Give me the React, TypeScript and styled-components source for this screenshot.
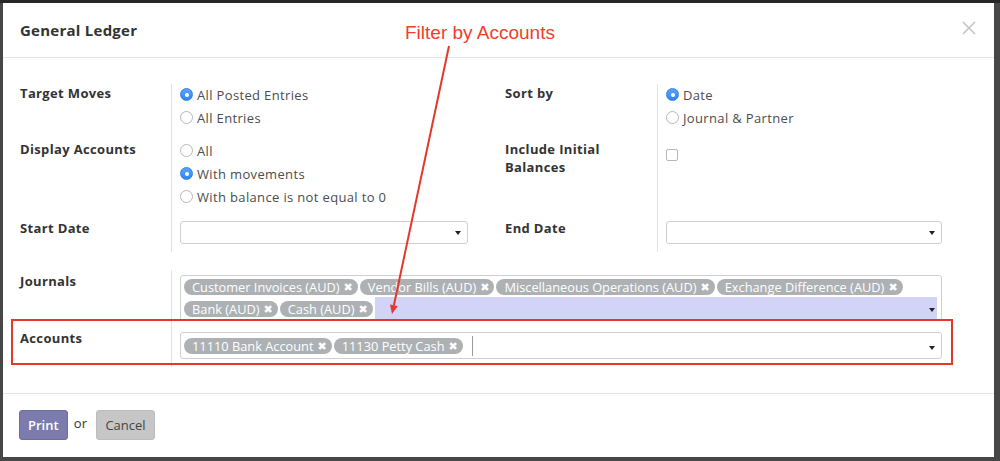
import React from "react";
import styled, { createGlobalStyle } from "styled-components";

const Global = createGlobalStyle`
  html, body { margin: 0; padding: 0; }
  body { font-family: "Open Sans", "DejaVu Sans", sans-serif; font-size: 13px; color: #4c4c4c; }
  * { box-sizing: border-box; }
`;

const Backdrop = styled.div`
  position: relative;
  width: 1000px;
  height: 461px;
  overflow: hidden;
  padding: 3px 6px 4px 3px;
  background: linear-gradient(#262626 0 3px, #474747 3px 100%);
`;

const Dialog = styled.div`
  height: 454px;
  background: #fff;
  display: flex;
  flex-direction: column;
`;

const Header = styled.div`
  height: 55px;
  flex: none;
  display: flex;
  align-items: center;
  justify-content: space-between;
  padding: 0 17px 0 17px;
  border-bottom: 1px solid #e5e5e5;
`;

const Title = styled.h4`
  margin: 0;
  font-size: 15px;
  font-weight: 700;
  color: #333;
  letter-spacing: 0.25px;
`;

const CloseBtn = styled.button`
  border: 0;
  background: none;
  padding: 0;
  width: 14px;
  height: 14px;
  display: flex;
  margin-right: 1px;
  margin-top: -4px;
`;

const Body = styled.div`
  flex: 1;
  padding: 26px 17px 0 17px;
`;

const TopGrid = styled.div`
  display: grid;
  grid-template-columns: 151px 297px 189px 285px;
`;

const BottomGrid = styled.div`
  display: grid;
  grid-template-columns: 151px 771px;
  margin-top: 18px;
`;

const Label = styled.div<{ $indent?: boolean; $pt?: number; $pb?: number }>`
  padding-left: ${(p) => (p.$indent ? 37 : 0)}px;
  padding-top: ${(p) => p.$pt ?? 0}px;
  padding-bottom: ${(p) => p.$pb ?? 10}px;
  font-weight: 700;
  color: #333;
  line-height: 18px;
  letter-spacing: 0.35px;
`;

const Field = styled.div<{ $pt?: number; $pb?: number }>`
  border-left: 1px solid #e2e2e2;
  padding-left: 8px;
  padding-top: ${(p) => p.$pt ?? 0}px;
  padding-bottom: ${(p) => p.$pb ?? 10}px;
`;

const RadioRow = styled.label`
  display: flex;
  align-items: center;
  height: 23px;
  gap: 4px;
  color: #4c4c4c;
  letter-spacing: 0.35px;
  margin-top: -1px;
  margin-bottom: 1px;
`;

const RadioDot = styled.span<{ $on?: boolean }>`
  width: 13px;
  height: 13px;
  border-radius: 50%;
  flex: none;
  display: flex;
  align-items: center;
  justify-content: center;
  background: ${(p) => (p.$on ? "linear-gradient(#5aa4fb, #2f86f0)" : "#fff")};
  border: 1px solid ${(p) => (p.$on ? "#2f7fe4" : "#b8b8b8")};
  &::after {
    content: "";
    width: 4px;
    height: 4px;
    border-radius: 50%;
    background: #fff;
    display: ${(p) => (p.$on ? "block" : "none")};
  }
`;

const Check = styled.span`
  display: block;
  width: 12px;
  height: 12px;
  margin-top: 9px;
  margin-left: 0;
  border: 1px solid #b8b8b8;
  border-radius: 2px;
  background: #fff;
`;

const SelectBox = styled.div<{ $h?: number }>`
  position: relative;
  height: ${(p) => p.$h ?? 23}px;
  border: 1px solid #cfcfcf;
  border-radius: 3px;
  background: #fff;
`;

const Caret = styled.span`
  position: absolute;
  right: 6px;
  bottom: 8px;
  width: 0;
  height: 0;
  border-left: 3.5px solid transparent;
  border-right: 3.5px solid transparent;
  border-top: 4px solid #222;
`;

const TagBox = styled.div`
  position: relative;
  display: flex;
  flex-wrap: wrap;
  align-items: center;
  border: 1px solid #cfcfcf;
  border-radius: 3px;
  padding: 1px 4px 0 3px;
  background: #fff;
`;

const TagBoxSingle = styled(TagBox)`
  height: 27px;
  padding-top: 0;
`;

const Tag = styled.span`
  display: inline-flex;
  align-items: center;
  height: 16px;
  margin: 2px 2px 2px 0;
  padding: 0 5px 0 8px;
  border-radius: 8px;
  background: #adb1b4;
  color: #fff;
  font-size: 12.8px;
  line-height: 16px;
  white-space: nowrap;
  gap: 4px;
`;

const TagX = styled.span`
  font-size: 11px;
  font-weight: 700;
  line-height: 16px;
`;

const TagInput = styled.div<{ $active?: boolean }>`
  flex: 1;
  min-width: 60px;
  height: 23px;
  background: ${(p) => (p.$active ? "#d3d3f8" : "transparent")};
`;

const Cursor = styled.span`
  width: 1px;
  height: 20px;
  background: #9a9a9a;
  margin-left: 7px;
`;

const Footer = styled.div`
  flex: none;
  height: 64px;
  border-top: 1px solid #e5e5e5;
  padding: 16px 16px 0 16px;
  display: flex;
  align-items: flex-start;
`;

const Button = styled.button<{ $primary?: boolean }>`
  height: 30px;
  padding: 0 ${(p) => (p.$primary ? 8 : 8)}px;
  border-radius: 3px;
  border: 1px solid ${(p) => (p.$primary ? "#6e6d9e" : "#bdbdbd")};
  background: ${(p) => (p.$primary ? "#7c7bad" : "#c6c6c6")};
  color: ${(p) => (p.$primary ? "#fff" : "#444")};
  font-family: "Open Sans", sans-serif;
  font-size: 13px;
  font-weight: ${(p) => (p.$primary ? 600 : 400)};
`;

const Or = styled.span`
  margin: 3px 9px 0 6px;
  color: #333;
  font-size: 13px;
  line-height: 20px;
  letter-spacing: 0.3px;
`;

const Note = styled.div`
  position: absolute;
  left: 405px;
  top: 22px;
  font-family: "Liberation Sans", Arial, sans-serif;
  font-size: 19px;
  color: #f23d2b;
  white-space: nowrap;
`;

const RedBox = styled.div`
  position: absolute;
  left: 11px;
  top: 319px;
  width: 942px;
  height: 46px;
  border: 2px solid #e3382a;
  pointer-events: none;
`;

const ArrowSvg = styled.svg`
  position: absolute;
  left: 0;
  top: 0;
  pointer-events: none;
`;

const Radio = ({ on, children }: { on?: boolean; children: React.ReactNode }) => (
  <RadioRow>
    <RadioDot $on={on} />
    {children}
  </RadioRow>
);

const T = ({ children }: { children: React.ReactNode }) => (
  <Tag>
    {children}
    <TagX>✖</TagX>
  </Tag>
);

export default function App() {
  return (
    <>
      <Global />
      <Backdrop>
        <Dialog>
          <Header>
            <Title>General Ledger</Title>
            <CloseBtn aria-label="close">
              <svg width="14" height="14" viewBox="0 0 14 14">
                <path d="M1 1 L13 13 M13 1 L1 13" stroke="#c4c4c4" strokeWidth="1.6" />
              </svg>
            </CloseBtn>
          </Header>
          <Body>
            <TopGrid>
              <Label>Target Moves</Label>
              <Field>
                <Radio on>All Posted Entries</Radio>
                <Radio>All Entries</Radio>
              </Field>
              <Label $indent>Sort by</Label>
              <Field>
                <Radio on>Date</Radio>
                <Radio>Journal &amp; Partner</Radio>
              </Field>

              <Label>Display Accounts</Label>
              <Field>
                <Radio>All</Radio>
                <Radio on>With movements</Radio>
                <Radio>With balance is not equal to 0</Radio>
              </Field>
              <Label $indent>
                Include Initial
                <br />
                Balances
              </Label>
              <Field>
                <Check />
              </Field>

              <Label $pb={8}>Start Date</Label>
              <Field $pt={2} $pb={8}>
                <SelectBox>
                  <Caret />
                </SelectBox>
              </Field>
              <Label $indent $pb={8}>End Date</Label>
              <Field $pt={2} $pb={8}>
                <SelectBox>
                  <Caret />
                </SelectBox>
              </Field>
            </TopGrid>

            <BottomGrid>
              <Label $pt={2} $pb={8}>Journals</Label>
              <Field $pt={5} $pb={8}>
                <TagBox>
                  <T>Customer Invoices (AUD)</T>
                  <T>Vendor Bills (AUD)</T>
                  <T>Miscellaneous Operations (AUD)</T>
                  <T>Exchange Difference (AUD)</T>
                  <T>Bank (AUD)</T>
                  <T>Cash (AUD)</T>
                  <TagInput $active />
                  <Caret />
                </TagBox>
              </Field>
              <Label $pt={0} $pb={8}>Accounts</Label>
              <Field $pt={3} $pb={8}>
                <TagBoxSingle>
                  <T>11110 Bank Account</T>
                  <T>11130 Petty Cash</T>
                  <Cursor />
                  <Caret />
                </TagBoxSingle>
              </Field>
            </BottomGrid>
          </Body>
          <Footer>
            <Button $primary>Print</Button>
            <Or>or</Or>
            <Button>Cancel</Button>
          </Footer>
        </Dialog>

        <Note>Filter by Accounts</Note>
        <RedBox />
        <ArrowSvg width="1000" height="461" viewBox="0 0 1000 461">
          <line x1="449" y1="46" x2="393.9" y2="305.2" stroke="#e3382a" strokeWidth="2" />
          <polygon points="392,314 397.8,306 390,304.4" fill="#e3382a" />
        </ArrowSvg>
      </Backdrop>
    </>
  );
}
